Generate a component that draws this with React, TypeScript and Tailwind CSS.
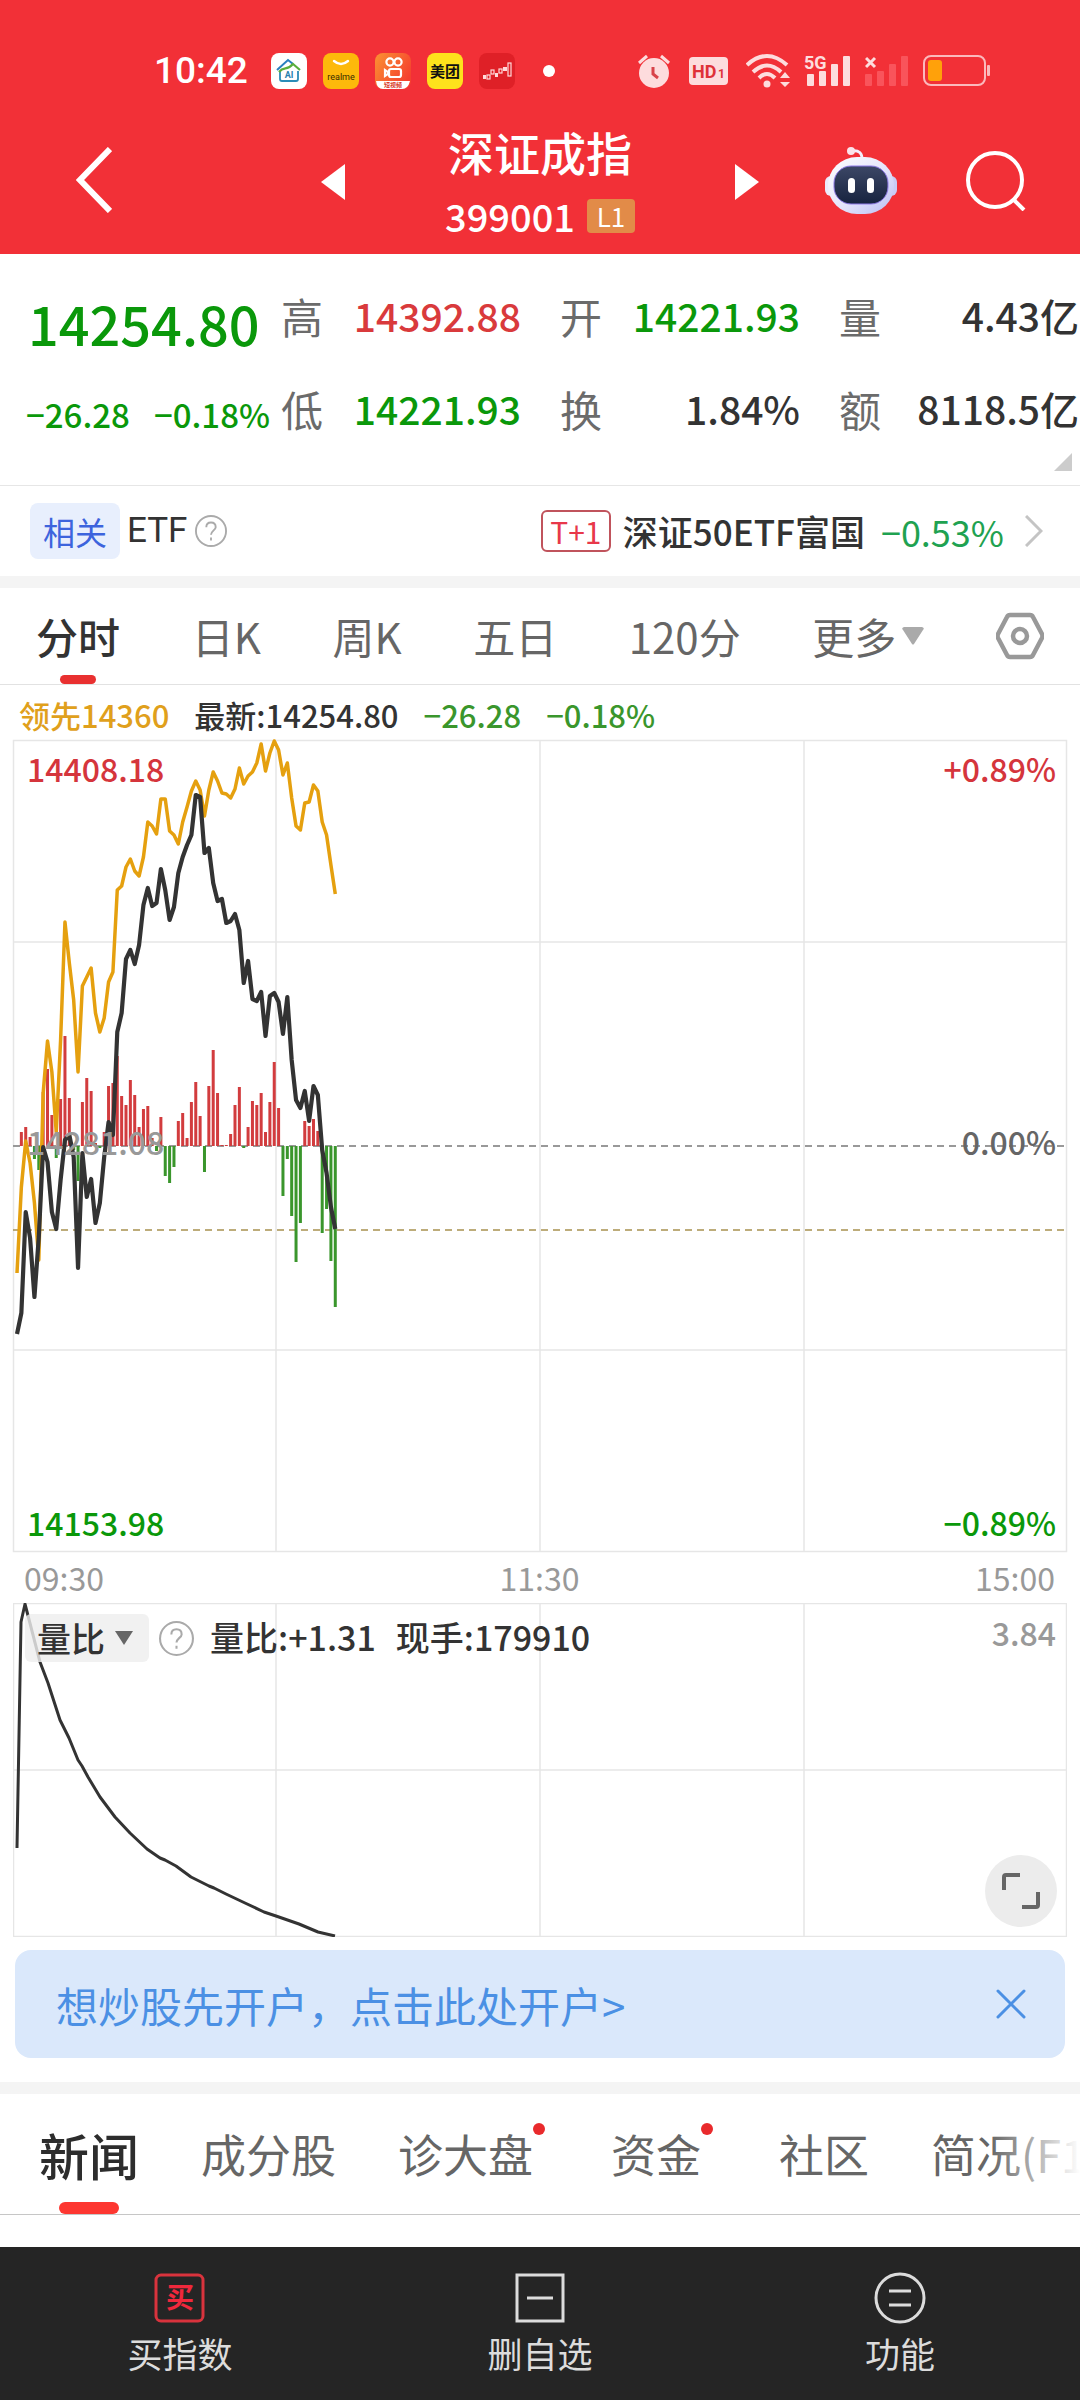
import { useState } from 'react';
import type { ReactNode } from 'react';

// 每分钟一个点，y 为图内像素
const AVG_LINE = [
  533, 447, 401, 423, 463, 520, 353, 301, 332, 392, 300, 182, 223, 260, 332, 246, 237, 228, 273, 292,
  278, 242, 232, 150, 146, 127, 119, 131, 136, 117, 82, 86, 94, 59, 59, 91, 95, 104, 82, 67,
  51, 41, 50, 76, 50, 32, 41, 53, 54, 58, 49, 28, 44, 36, 32, 23, 4, 31, 13, 1,
  10, 35, 23, 58, 86, 90, 63, 62, 45, 51, 82, 95, 125, 154,
];

const PRICE_LINE = [
  594, 573, 472, 498, 557, 497, 407, 422, 472, 489, 440, 400, 395, 417, 528, 413, 457, 439, 483, 463,
  417, 382, 395, 292, 273, 219, 210, 224, 205, 165, 148, 166, 163, 129, 150, 180, 167, 133, 117, 105,
  95, 55, 57, 113, 108, 143, 161, 159, 183, 181, 174, 190, 243, 221, 259, 261, 252, 296, 256, 253,
  262, 294, 257, 320, 360, 368, 351, 381, 346, 355, 410, 433, 467, 489,
];

const BARS = [
  0, 14, 19, 9, -13, -24, 54, 77, 31, -12, 47, 110, 48, -4, -35, 44, 68, 55, 3, -2,
  14, 60, 63, 90, 50, 41, 66, 51, 19, 37, 40, 8, -5, 29, -30, -37, -21, 25, 33, 8,
  44, 64, 30, -26, 60, 96, 53, 1, 1, 12, 41, 59, -2, 19, 45, 41, 53, 14, 44, 84,
  38, -50, -13, -70, -116, -77, 25, 20, 27, 15, -87, -63, -115, -161,
];

const RATIO_POINTS =
  '4,245 8,19 12,1 27,59 35,80 47,117 56,135 65,157 69,163 75,174 87,194 102,214 117,230 134,246 147,255 152,257 163,263 178,274 196,283 201,285 213,291 232,300 251,309 263,313 286,321 305,329 322,333';

const ZERO_Y = 406;
const minuteX = (i: number) => 4 + i * 4.36;
const toPoints = (data: number[]) => data.map((y, i) => `${minuteX(i)},${y}`).join(' ');

const QUOTES = [
  { label: '高', value: '14392.88', color: 'text-[#d93a3c]' },
  { label: '开', value: '14221.93', color: 'text-[#0a980a]' },
  { label: '量', value: '4.43亿', color: 'text-[#333]' },
  { label: '低', value: '14221.93', color: 'text-[#0a980a]' },
  { label: '换', value: '1.84%', color: 'text-[#333]' },
  { label: '额', value: '8118.5亿', color: 'text-[#333]' },
];

const PERIODS = ['分时', '日K', '周K', '五日', '120分'];

const NEWS_TABS = [
  { name: '新闻', dot: false },
  { name: '成分股', dot: false },
  { name: '诊大盘', dot: true },
  { name: '资金', dot: true },
  { name: '社区', dot: false },
  { name: '简况(F10)', dot: false },
];

function StatusBar() {
  return (
    <div className="flex items-center justify-between pt-[53px] pb-[35px] pl-[154px] pr-[90px] h-[124px]">
      <div className="flex items-center">
        <span className="font-['Roboto',sans-serif] font-medium text-[37px] leading-9 w-[117px]">10:42</span>
        <div className="flex items-center gap-4">
          <svg width="36" height="36" viewBox="0 0 36 36">
            <rect width="36" height="36" rx="8" fill="#fff" />
            <path d="M9 18v8q0 2 2 2h14q2 0 2-2v-8" fill="none" stroke="#2a8cb8" strokeWidth="1.8" />
            <path d="M6 17L17 7l5 4" fill="none" stroke="#2a7fc0" strokeWidth="2" />
            <path d="M8 19c5-6 8-1 14-8l7 6" fill="none" stroke="#5aae3c" strokeWidth="2.2" />
            <text x="18" y="25" fontSize="9" fontWeight="700" fill="#2a7fb0" textAnchor="middle" fontFamily="Roboto">AI</text>
          </svg>
          <svg width="36" height="36" viewBox="0 0 36 36">
            <rect width="36" height="36" rx="8" fill="#fdb90b" />
            <path d="M11 8q7 6 14 0" fill="none" stroke="#fff" strokeWidth="2.4" strokeLinecap="round" />
            <text x="18" y="27" fontSize="9" fill="#3b2d00" textAnchor="middle" fontFamily="Roboto">realme</text>
          </svg>
          <svg width="36" height="36" viewBox="0 0 36 36">
            <defs>
              <linearGradient id="ks" x1="0" y1="0" x2="1" y2="0.6">
                <stop offset="0" stopColor="#fb9232" />
                <stop offset="1" stopColor="#f5402f" />
              </linearGradient>
            </defs>
            <rect width="36" height="36" rx="8" fill="url(#ks)" />
            <g fill="none" stroke="#fff" strokeWidth="2.2">
              <circle cx="15" cy="9" r="3.6" />
              <circle cx="23" cy="9" r="3.6" />
              <rect x="14" y="16" width="12" height="8" rx="2" />
              <path d="M10 17v6l3-2v-2z" />
            </g>
            <path d="M1 28h34q-2 8-8 8H8q-6 0-7-8z" fill="#fff" />
            <text x="18" y="34" fontSize="6" fontWeight="700" fill="#d8402c" textAnchor="middle">短视频</text>
          </svg>
          <svg width="36" height="36" viewBox="0 0 36 36">
            <rect width="36" height="36" rx="8" fill="#fee21c" />
            <text x="18" y="24" fontSize="15" fontWeight="700" fill="#111" textAnchor="middle">美团</text>
          </svg>
          <svg width="36" height="36" viewBox="0 0 36 36">
            <rect width="36" height="36" rx="8" fill="#df2027" />
            <g fill="none" stroke="#ffd9d9" strokeWidth="1.2">
              <rect x="8" y="22" width="3" height="4" />
              <rect x="12" y="17" width="3" height="4" />
              <rect x="20" y="16" width="3" height="4" />
              <rect x="29" y="10" width="3" height="13" />
            </g>
            <path d="M4 22h3v4H4zM16 20h3v4h-3zM24 14h4v4h-4z" fill="#ffd9d9" />
          </svg>
          <i className="block size-3 rounded-full bg-white ml-3" />
        </div>
      </div>
      <div className="flex items-center">
        <svg width="32" height="36" viewBox="0 0 32 36" className="mr-[19px]">
          <circle cx="16" cy="20" r="15" fill="#fddcdd" />
          <path d="M1 10l8-7M31 10l-8-7" stroke="#fddcdd" strokeWidth="3" />
          <path d="M15 14v7l5 4" fill="none" stroke="#d8434a" strokeWidth="3" />
        </svg>
        <svg width="39" height="28" viewBox="0 0 39 28" className="mr-[18px]">
          <rect width="39" height="28" rx="4" fill="#fddcdd" />
          <text x="3" y="21" fontSize="18" fontWeight="700" fill="#df3138" fontFamily="Roboto">HD</text>
          <text x="29" y="21" fontSize="12" fontWeight="700" fill="#df3138" fontFamily="Roboto">1</text>
        </svg>
        <svg width="46" height="36" viewBox="0 0 46 36" className="mr-3">
          <g fill="none" stroke="#fddcdd" strokeWidth="4">
            <path d="M1 12q20-18 40 0" />
            <path d="M7 19q14-13 28 0" />
            <path d="M13 25q8-8 16 0" />
          </g>
          <circle cx="21" cy="31" r="3.5" fill="#fddcdd" />
          <path d="M34 25l5-6 5 6zM34 29h10l-5 5z" fill="#fddcdd" />
        </svg>
        <svg width="46" height="36" viewBox="0 0 46 36" className="mr-[15px] overflow-visible">
          <text x="0" y="16" fontSize="18" fontWeight="700" fill="#fddcdd" fontFamily="Roboto">5G</text>
          <g fill="#fddcdd">
            <rect x="3" y="21" width="7" height="12" rx="1" />
            <rect x="15" y="18" width="7" height="15" rx="1" />
            <rect x="27" y="11" width="7" height="22" rx="1" />
            <rect x="39" y="3" width="7" height="30" rx="1" />
          </g>
        </svg>
        <svg width="44" height="36" viewBox="0 0 44 36" className="mr-[14px]">
          <path d="M1 5l9 9M10 5l-9 9" stroke="#fddcdd" strokeWidth="3" />
          <g fill="#f9545b">
            <rect x="0" y="21" width="7" height="12" rx="1" />
            <rect x="12" y="18" width="7" height="15" rx="1" />
            <rect x="24" y="11" width="7" height="22" rx="1" />
            <rect x="36" y="3" width="7" height="30" rx="1" />
          </g>
        </svg>
        <svg width="67" height="36" viewBox="0 0 67 36">
          <rect x="1" y="3" width="61" height="29" rx="7" fill="none" stroke="#fbb9bc" strokeWidth="2" />
          <rect x="5" y="7" width="14" height="21" rx="3" fill="#ffa10a" />
          <rect x="64" y="12" width="3" height="11" rx="1" fill="#fbb9bc" />
        </svg>
      </div>
    </div>
  );
}

function NavBar() {
  return (
    <div className="grid grid-cols-[1fr_auto_1fr] items-start h-[130px]">
      <button type="button" aria-label="返回" className="h-[112px] pl-[76px] flex items-center">
        <svg width="36" height="66" viewBox="0 0 36 66" fill="none" stroke="#fff" strokeWidth="6">
          <path d="M34 2L4 33l30 31" />
        </svg>
      </button>
      <div className="flex w-[438px] justify-between">
        <button type="button" aria-label="上一个" className="h-[116px] flex items-center">
          <svg width="24" height="36" viewBox="0 0 24 36"><path d="M24 0v36L0 18z" fill="#fff" /></svg>
        </button>
        <div className="flex flex-col items-center">
          <h1 className="font-medium text-[46px] leading-[54px]">深证成指</h1>
          <div className="flex items-center gap-3 h-[76px]">
            <span className="font-medium text-[38px] leading-10">399001</span>
            <span className="w-12 h-[34px] rounded-sm bg-[#e28b48] text-center text-[26px] leading-[34px]">L1</span>
          </div>
        </div>
        <button type="button" aria-label="下一个" className="h-[116px] flex items-center">
          <svg width="24" height="36" viewBox="0 0 24 36"><path d="M0 0v36l24-18z" fill="#fff" /></svg>
        </button>
      </div>
      <div className="flex items-center justify-between h-[114px] pl-[66px] pr-[54px]">
        <button type="button" aria-label="智能助手">
          <svg width="72" height="70" viewBox="0 0 72 70">
            <defs>
              <linearGradient id="shell" x1="0" y1="0" x2="1" y2="1">
                <stop offset="0" stopColor="#ffffff" />
                <stop offset="0.55" stopColor="#e4e4fb" />
                <stop offset="1" stopColor="#b9bdf3" />
              </linearGradient>
              <linearGradient id="face" x1="0" y1="0" x2="0" y2="1">
                <stop offset="0" stopColor="#3c4766" />
                <stop offset="1" stopColor="#17233f" />
              </linearGradient>
            </defs>
            <path d="M26 5q12-2 11 10" fill="none" stroke="#f3eefc" strokeWidth="3" />
            <circle cx="26" cy="5" r="4" fill="#fbe3ea" />
            <rect x="0" y="30" width="12" height="20" rx="6" fill="#eceafc" />
            <rect x="60" y="30" width="12" height="20" rx="6" fill="#c9ccf6" />
            <rect x="3" y="11" width="66" height="57" rx="29" fill="url(#shell)" />
            <rect x="9" y="20" width="54" height="38" rx="17" fill="url(#face)" stroke="#8f7be8" strokeWidth="1" />
            <rect x="23" y="32" width="7" height="15" rx="3.5" fill="#fff" />
            <rect x="42" y="32" width="7" height="15" rx="3.5" fill="#fff" />
          </svg>
        </button>
        <button type="button" aria-label="搜索">
          <svg width="60" height="60" viewBox="0 0 60 60" fill="none" stroke="#fff" strokeWidth="4">
            <circle cx="29" cy="29" r="27" />
            <path d="M47 48l11 11" />
          </svg>
        </button>
      </div>
    </div>
  );
}

function QuotePanel() {
  return (
    <section className="relative flex h-[232px] border-b border-[#e6e6e6]">
      <div className="w-[281px] shrink-0 pt-5 text-[#0a980a] whitespace-nowrap">
        <div className="pl-7 font-medium text-[54px] leading-[98px]">14254.80</div>
        <div className="pl-[26px] flex gap-6 font-medium text-[33px] leading-[84px]">
          <span>−26.28</span>
          <span>−0.18%</span>
        </div>
      </div>
      <dl className="flex-1 grid grid-cols-3 gap-x-[39px] pt-[15px] pr-px content-start">
        {QUOTES.map((q) => (
          <div key={q.label} className="flex items-center justify-between h-[93px] whitespace-nowrap">
            <dt className="text-[42px] text-[#6b6b6b]">{q.label}</dt>
            <dd className={`text-[39px] font-medium ${q.color}`}>{q.value}</dd>
          </div>
        ))}
      </dl>
      <svg width="18" height="18" viewBox="0 0 18 18" className="absolute right-2 bottom-[14px]">
        <path d="M18 0v18H0z" fill="#ccc" />
      </svg>
    </section>
  );
}

function HelpIcon({ size }: { size: number }) {
  return (
    <svg width={size} height={size} viewBox="0 0 34 34" fill="none" stroke="#aaa" strokeWidth="2">
      <circle cx="17" cy="17" r="16" />
      <path d="M12 13q0-5 5-5t5 5c0 3-5 4-5 8M17 24v3" />
    </svg>
  );
}

function RelatedEtf() {
  return (
    <section className="flex items-center justify-between h-[90px] pl-[30px] pr-[37px]">
      <div className="flex items-center">
        <span className="w-[90px] h-14 rounded-lg bg-[#e8effd] text-[#3d64dd] text-[32px] leading-14 text-center">相关</span>
        <span className="font-['Roboto',sans-serif] text-[35px] text-[#333] ml-[7px] mr-2">ETF</span>
        <button type="button" aria-label="说明"><HelpIcon size={32} /></button>
      </div>
      <a href="#etf" className="flex items-center text-[#333] whitespace-nowrap">
        <span className="w-[70px] h-[42px] rounded-md border-2 border-[#c0535c] text-[#e8384a] text-[30px] leading-[38px] text-center mr-3">T+1</span>
        <span className="text-[35px] font-medium mr-4">深证50ETF富国</span>
        <span className="text-[36px] text-[#1fa251] mr-[21px] leading-10">−0.53%</span>
        <svg width="18" height="32" viewBox="0 0 18 32" fill="none" stroke="#c4c4c4" strokeWidth="3">
          <path d="M1 1l15 15L1 31" />
        </svg>
      </a>
    </section>
  );
}

function PeriodTabs() {
  const [active, setActive] = useState('分时');
  return (
    <nav className="flex items-stretch justify-between h-[97px] px-9 border-b border-[#e2e2e2] text-[42px] leading-[94px] text-[#666] whitespace-nowrap">
      {PERIODS.map((p) => (
        <button
          key={p}
          type="button"
          onClick={() => setActive(p)}
          className={p === active ? 'relative font-medium text-[#333]' : 'relative'}
        >
          {p}
          {p === active && (
            <i className="absolute bottom-0 left-1/2 -translate-x-1/2 w-9 h-[9px] rounded-full bg-[#e93030]" />
          )}
        </button>
      ))}
      <button type="button" className="flex items-center gap-[6px]">
        更多
        <svg width="22" height="18" viewBox="0 0 22 18"><path d="M2 0h18q3 1 1 3L12 17q-1 1-2 0L1 3q-2-2 1-3z" fill="#aaa" /></svg>
      </button>
      <button type="button" aria-label="设置">
        <svg width="48" height="48" viewBox="0 0 48 48" fill="none" stroke="#999" strokeWidth="4.5" strokeLinejoin="round">
          <path d="M14 3h20q2 0 3 2l9 17q1 2 0 4l-9 17q-1 2-3 2H14q-2 0-3-2L2 26q-1-2 0-4l9-17q1-2 3-2z" />
          <circle cx="24" cy="24" r="7" />
        </svg>
      </button>
    </nav>
  );
}

function Grid({ height, rows }: { height: number; rows: number[] }) {
  return (
    <g fill="none" stroke="#e6e6e6" strokeWidth="1.5">
      <rect x="0.5" y="0.5" width="1053" height={height - 1} />
      {[263, 527, 791].map((x) => <path key={x} d={`M${x} 0V${height}`} />)}
      {rows.map((y) => <path key={y} d={`M0 ${y}H1054`} />)}
    </g>
  );
}

function PriceChart() {
  return (
    <section className="px-[13px]">
      <div className="flex items-center gap-[25px] h-[55px] pl-[6px] pt-1 text-[31px] leading-[46px] font-medium text-[#3a962c] whitespace-nowrap">
        <span className="text-[#e0a01c]">领先14360</span>
        <span className="text-[#333]">最新:14254.80</span>
        <span>−26.28</span>
        <span>−0.18%</span>
      </div>
      <div className="relative text-[32px] font-medium leading-10">
        <svg viewBox="0 0 1054 812" className="block w-full h-auto overflow-visible">
          <Grid height={812} rows={[202, 610]} />
          <path d="M0 406H1054" stroke="#999" strokeWidth="2" strokeDasharray="7 5" />
          <path d="M0 490H1054" stroke="#a8914f" strokeWidth="1.5" strokeDasharray="7 5" />
          {BARS.map((v, i) => (
            <rect
              key={i}
              x={minuteX(i) - 1.5}
              y={v > 0 ? ZERO_Y - v : ZERO_Y}
              width="3"
              height={Math.abs(v)}
              fill={v > 0 ? '#d23c3e' : '#3a962c'}
            />
          ))}
          <polyline points={toPoints(AVG_LINE)} fill="none" stroke="#e5a00f" strokeWidth="3.5" strokeLinejoin="round" />
          <polyline points={toPoints(PRICE_LINE)} fill="none" stroke="#333" strokeWidth="4.2" strokeLinejoin="round" />
        </svg>
        <div className="absolute inset-0 flex flex-col justify-between pt-2 pb-[10px] pl-[14px] pr-[11px]">
          <div className="flex justify-between text-[#d5353c]"><span>14408.18</span><span>+0.89%</span></div>
          <div className="flex justify-between pb-2 text-[#999]"><span>14281.08</span><span className="text-[#666]">0.00%</span></div>
          <div className="flex justify-between text-[#0a980a]"><span>14153.98</span><span>−0.89%</span></div>
        </div>
      </div>
      <div className="flex items-center justify-between h-[51px] pl-[11px] pr-3 pb-[2px] text-[32px] leading-[48px] text-[#999]">
        <span>09:30</span>
        <span>11:30</span>
        <span>15:00</span>
      </div>
    </section>
  );
}

function RatioChart() {
  return (
    <section className="relative mx-[13px] font-medium">
      <svg viewBox="0 0 1054 334" className="block w-full h-auto">
        <Grid height={334} rows={[167]} />
        <polyline points={RATIO_POINTS} fill="none" stroke="#333" strokeWidth="3" strokeLinejoin="round" />
      </svg>
      <div className="absolute inset-x-0 top-0 flex items-start pl-3 pr-[11px] pt-[11px] text-[34px] leading-[46px] text-[#333] whitespace-nowrap">
        <button type="button" className="flex items-center gap-[10px] w-[124px] h-12 pl-3 mr-[10px] rounded-md bg-[#eeeeeed0]">
          量比
          <svg width="18" height="14" viewBox="0 0 18 14"><path d="M0 0h18L9 14z" fill="#666" /></svg>
        </button>
        <button type="button" aria-label="说明" className="h-12"><HelpIcon size={35} /></button>
        <span className="ml-4">量比:+1.31</span>
        <span className="ml-5">现手:179910</span>
        <span className="ml-auto text-[32px] leading-9 text-[#999]">3.84</span>
      </div>
      <button type="button" aria-label="全屏" className="absolute right-[10px] bottom-[10px] size-[72px] rounded-full bg-[#ececec] flex items-center justify-center">
        <svg width="38" height="36" viewBox="0 0 38 36" fill="none" stroke="#666" strokeWidth="4">
          <path d="M2 17V4q0-2 2-2h14M36 19v13q0 2-2 2H20" />
        </svg>
      </button>
    </section>
  );
}

function OpenAccountBanner() {
  const [closed, setClosed] = useState(false);
  if (closed) return null;
  return (
    <div className="flex items-center justify-between mx-[15px] mt-[13px] mb-6 h-[108px] pl-[41px] pr-[39px] rounded-2xl bg-[#dae8fb] text-[#4b90e4]">
      <a href="#open" className="text-[42px]">想炒股先开户，点击此处开户&gt;</a>
      <button type="button" aria-label="关闭" onClick={() => setClosed(true)}>
        <svg width="30" height="30" viewBox="0 0 30 30" fill="none" stroke="#4b90e4" strokeWidth="3" strokeLinecap="round">
          <path d="M2 2l26 26M28 2L2 28" />
        </svg>
      </button>
    </div>
  );
}

function NewsTabs() {
  const [active, setActive] = useState('新闻');
  return (
    <nav className="relative flex h-[121px] pl-[39px] gap-[62px] border-b border-[#c6c6c6] text-[45px] text-[#666] whitespace-nowrap overflow-hidden">
      {NEWS_TABS.map((t) => (
        <div key={t.name} className={t.dot ? 'shrink-0 pr-4' : 'shrink-0'}>
          <button
            type="button"
            onClick={() => setActive(t.name)}
            className={t.name === active ? 'relative h-full text-[50px] font-medium text-[#2d2d2d]' : 'relative h-full'}
          >
            {t.name}
            {t.dot && <i className="absolute top-[29px] -right-3 size-3 rounded-full bg-[#e92a2c]" />}
            {t.name === active && (
              <i className="absolute bottom-0 left-1/2 -translate-x-1/2 w-[60px] h-3 rounded-full bg-[#fd3731]" />
            )}
          </button>
        </div>
      ))}
      <div className="absolute right-0 top-0 h-full w-[90px] bg-gradient-to-r from-white/0 to-white" />
    </nav>
  );
}

function BottomItem({ label, children }: { label: string; children: ReactNode }) {
  return (
    <button type="button" className="flex flex-1 flex-col items-center pt-[25px] text-[35px] leading-10 text-[#dcdcdc]">
      <svg width="52" height="52" viewBox="0 0 52 52" fill="none" stroke="#dcdcdc" strokeWidth="3" className="mb-[9px]">
        {children}
      </svg>
      {label}
    </button>
  );
}

export default function App() {
  return (
    <div className="flex flex-col min-h-screen bg-white font-['Noto_Sans_CJK_SC',sans-serif]">
      <header className="bg-[#f23037] text-white">
        <StatusBar />
        <NavBar />
      </header>
      <QuotePanel />
      <RelatedEtf />
      <div className="h-3 bg-[#f4f4f4]" />
      <PeriodTabs />
      <PriceChart />
      <RatioChart />
      <OpenAccountBanner />
      <div className="h-3 bg-[#f4f4f4]" />
      <NewsTabs />
      <footer className="mt-auto flex h-[153px] bg-[#252525]">
        <BottomItem label="买指数">
          <rect x="2" y="3" width="47" height="46" rx="5" stroke="#d9333d" />
          <text x="26" y="36" fontSize="28" fontWeight="700" fill="#f0283c" stroke="none" textAnchor="middle">买</text>
        </BottomItem>
        <BottomItem label="删自选">
          <rect x="3" y="3" width="46" height="46" />
          <path d="M13 26h26" />
        </BottomItem>
        <BottomItem label="功能">
          <circle cx="26" cy="26" r="24" />
          <path d="M15 19h22M15 33h22" />
        </BottomItem>
      </footer>
    </div>
  );
}
